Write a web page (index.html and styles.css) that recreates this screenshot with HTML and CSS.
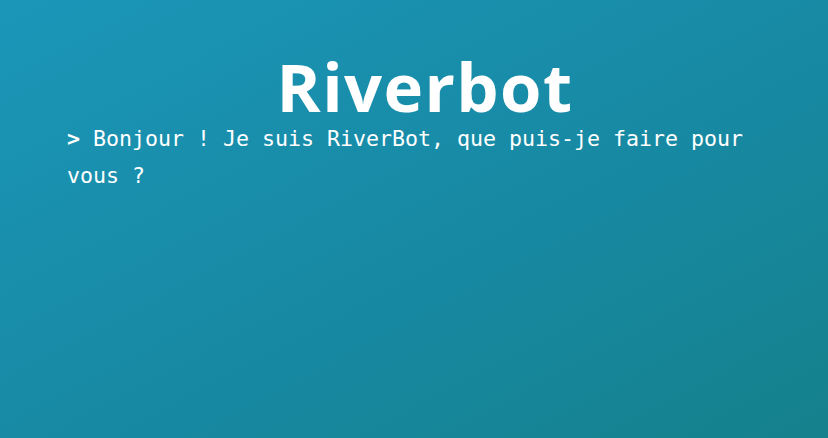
FILE: index.html
```html
<!DOCTYPE html>
<html lang="fr">
<head>
<meta charset="utf-8">
<title>Riverbot</title>
<link rel="stylesheet" href="styles.css">
</head>
<body>
<main class="wrap">
  <h1 class="title">Riverbot</h1>
  <p class="console"><span class="prompt">&gt;</span> Bonjour ! Je suis RiverBot, que puis-je faire pour vous ?</p>
</main>
</body>
</html>
```

FILE: styles.css
```css
html, body {
  margin: 0;
  height: 100%;
}
body {
  background: linear-gradient(to bottom right, #1b96b8 0%, #1789a3 55%, #15818c 100%);
  color: #ffffff;
}
.wrap {
  padding: 53px 45px 0 67px;
}
.title {
  margin: 0;
  font-family: "Open Sans", sans-serif;
  font-weight: 700;
  font-size: 67px;
  line-height: 67px;
  letter-spacing: 1.4px;
  text-align: center;
}
.console {
  margin: 0;
  font-family: "DejaVu Sans Mono", monospace;
  font-size: 21.6px;
  line-height: 37px;
}
.prompt {
  font-weight: 700;
}
```
